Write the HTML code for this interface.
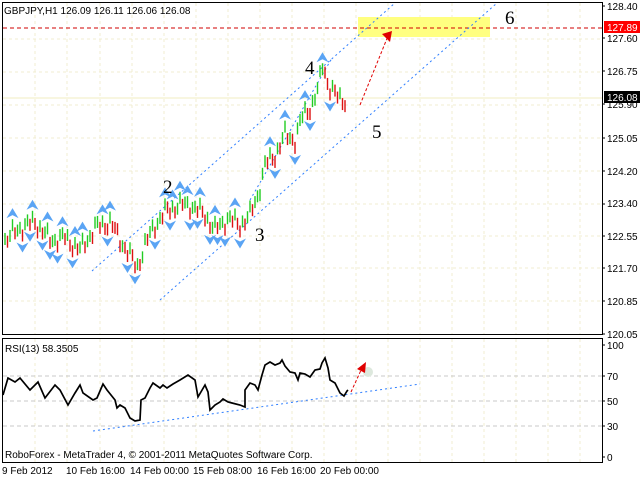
<!DOCTYPE html>
<html><head><meta charset="utf-8"><style>
html,body{margin:0;padding:0;background:#fff;width:640px;height:480px;overflow:hidden;font-family:"Liberation Sans",sans-serif}
svg{position:absolute;left:0;top:0}
.ax{font-size:10px;fill:#000}
.lbl{font-family:"Liberation Serif",serif;font-size:19px;fill:#000}
</style></head><body>
<svg id="s" width="640" height="480" xmlns="http://www.w3.org/2000/svg">
<g stroke="#f0ecd0" stroke-dasharray="3,3" stroke-width="1">
<path d="M35 3V334M67 3V334M100 3V334M132 3V334M164 3V334M196 3V334M228 3V334M260 3V334M292 3V334M324 3V334M356 3V334M388 3V334M420 3V334M452 3V334M484 3V334M516 3V334M548 3V334M580 3V334"/>
<path d="M35 339V462M67 339V462M100 339V462M132 339V462M164 339V462M196 339V462M228 339V462M260 339V462M292 339V462M324 339V462M356 339V462M388 339V462M420 339V462M452 339V462M484 339V462M516 339V462M548 339V462M580 339V462"/>
<path d="M3 39H602M3 72H602M3 105H602M3 138H602M3 171H602M3 204H602M3 236H602M3 268H602M3 301H602"/>
</g>
<line x1="3" y1="98" x2="602" y2="98" stroke="#f0ecc0"/>
<g stroke="#c8c8c8" stroke-dasharray="4,3"><path d="M3 376H602M3 401H602M3 426H602"/></g>
<rect x="358" y="17" width="132" height="20" fill="#ffff80"/>
<line x1="3" y1="28" x2="602" y2="28" stroke="#d00000" stroke-dasharray="4,3"/>
<g stroke="#2f7fff" stroke-dasharray="2,3" fill="none">
<path d="M92 271L395 3"/><path d="M160 300L497 3"/><path d="M250 200L332 58"/><path d="M93 431L420 384"/>
</g>
<g id="bars"></g>
<g id="fr" fill="#5aa4f4"></g>
<path d="M360 105L388 36" stroke="#e00000" stroke-dasharray="3,2"/>
<polygon points="382,34 392,31 390,42" fill="#e00000"/>
<path d="M351 392L362 368" stroke="#e00000" stroke-dasharray="3,2"/>
<circle cx="368" cy="372" r="5" fill="#dde8dd"/>
<polygon points="357,369 366,362 365,373" fill="#e00000"/>
<polyline id="rsi" fill="none" stroke="#000" stroke-width="1.7"/>
<text class="lbl" x="305" y="74">4</text>
<text class="lbl" x="163" y="193">2</text>
<text class="lbl" x="255" y="241">3</text>
<text class="lbl" x="372" y="138">5</text>
<text class="lbl" x="505" y="24">6</text>
<rect x="2.5" y="2.5" width="600" height="332" fill="none" stroke="#000"/>
<rect x="2.5" y="338.5" width="600" height="124" fill="none" stroke="#000"/>
<g class="ax">
<text x="4" y="14">GBPJPY,H1  126.09 126.11 126.06 126.08</text>
<text x="5" y="352">RSI(13) 58.3505</text>
<text x="5" y="458">RoboForex - MetaTrader 4, © 2001-2011 MetaQuotes Software Corp.</text>
<text x="607" y="10">128.40</text><text x="607" y="42">127.60</text><text x="607" y="75">126.75</text><text x="607" y="108">125.90</text><text x="607" y="142">125.05</text><text x="607" y="175">124.20</text><text x="607" y="207">123.40</text><text x="607" y="240">122.55</text><text x="607" y="272">121.70</text><text x="607" y="305">120.85</text><text x="607" y="338">120.05</text>
<text x="607" y="349">100</text><text x="607" y="380">70</text><text x="607" y="405">50</text><text x="607" y="430">30</text><text x="607" y="461">0</text>
<text x="2" y="474">9 Feb 2012</text><text x="66" y="474">10 Feb 16:00</text><text x="130" y="474">14 Feb 00:00</text><text x="193" y="474">15 Feb 08:00</text><text x="257" y="474">16 Feb 16:00</text><text x="320" y="474">20 Feb 00:00</text>
</g>
<rect x="604" y="21" width="36" height="12" fill="#ff0000"/><text x="607" y="31" style="fill:#fff;font-size:10px">127.89</text>
<rect x="604" y="91" width="36" height="12" fill="#000"/><text x="607" y="101" style="fill:#fff;font-size:10px">126.08</text>
<g stroke="#000"><path d="M602 6h3M602 38h3M602 71h3M602 104h3M602 138h3M602 171h3M602 204h3M602 236h3M602 268h3M602 301h3M602 334h3M602 345h3M602 376h3M602 401h3M602 426h3M602 457h3"/></g>
</svg>
<script>
var P=[[5,240],[20,228],[35,222],[50,240],[65,238],[80,250],[95,228],[110,222],[120,240],[130,255],[137,268],[145,245],[155,225],[165,212],[178,205],[190,205],[205,215],[215,230],[228,218],[240,225],[250,215],[258,195],[265,165],[275,155],[285,135],[295,140],[303,115],[312,105],[318,90],[323,62],[328,85],[335,95],[345,100]];
function py(x){for(var i=0;i<P.length-1;i++){if(x>=P[i][0]&&x<=P[i+1][0]){var t=(x-P[i][0])/(P[i+1][0]-P[i][0]);return P[i][1]+t*(P[i+1][1]-P[i][1]);}}return 100;}
var prev=240,ns="http://www.w3.org/2000/svg",g=document.getElementById("bars"),f=document.getElementById("fr");
var ys=[];for(var x=5;x<=345;x+=2.5){var y=py(x)+Math.sin(x*0.9)*5+Math.sin(x*0.37)*4;ys.push([x,y]);}
for(var i=0;i<ys.length;i++){var x=ys[i][0],y=ys[i][1],up=y<prev;var l=document.createElementNS(ns,"line");l.setAttribute("x1",x);l.setAttribute("x2",x);l.setAttribute("y1",y-6);l.setAttribute("y2",y+6);l.setAttribute("stroke",up?"#22cc22":"#dd1111");l.setAttribute("stroke-width","1.4");g.appendChild(l);prev=y;}
for(var i=2;i<ys.length-2;i++){var y=ys[i][1],x=ys[i][0];
if(y<ys[i-1][1]&&y<ys[i+1][1]&&y<ys[i-2][1]&&y<ys[i+2][1]){var p=document.createElementNS(ns,"polygon");var t=y-12;p.setAttribute("points",(x-6)+","+(t+5)+" "+x+","+(t-5)+" "+(x+6)+","+(t+5)+" "+x+","+(t+2));f.appendChild(p);}
if(y>ys[i-1][1]&&y>ys[i+1][1]&&y>ys[i-2][1]&&y>ys[i+2][1]){var p=document.createElementNS(ns,"polygon");var t=y+12;p.setAttribute("points",(x-6)+","+(t-5)+" "+x+","+(t+5)+" "+(x+6)+","+(t-5)+" "+x+","+(t-2));f.appendChild(p);}}
var R=[[3,395],[8,378],[15,382],[20,378],[30,390],[38,382],[45,398],[55,385],[60,390],[68,405],[75,393],[80,385],[83,393],[93,400],[97,398],[103,384],[107,390],[115,400],[117,408],[120,405],[125,408],[130,418],[135,421],[140,420],[141,400],[145,398],[150,388],[153,383],[160,388],[163,385],[167,388],[173,384],[180,380],[188,375],[195,380],[198,397],[205,385],[208,392],[210,410],[215,405],[220,402],[223,399],[228,402],[232,403],[240,405],[245,407],[245,390],[250,383],[255,385],[258,390],[262,375],[265,365],[270,362],[275,365],[280,363],[282,360],[285,366],[290,372],[295,373],[298,380],[300,373],[305,374],[310,377],[315,370],[320,369],[322,363],[325,358],[328,368],[330,380],[335,383],[340,393],[344,396],[347,391],[348,390]];
var s="";for(var i=0;i<R.length;i++){s+=R[i][0]+","+R[i][1]+" ";}
document.getElementById("rsi").setAttribute("points",s);
</script>
</body></html>
